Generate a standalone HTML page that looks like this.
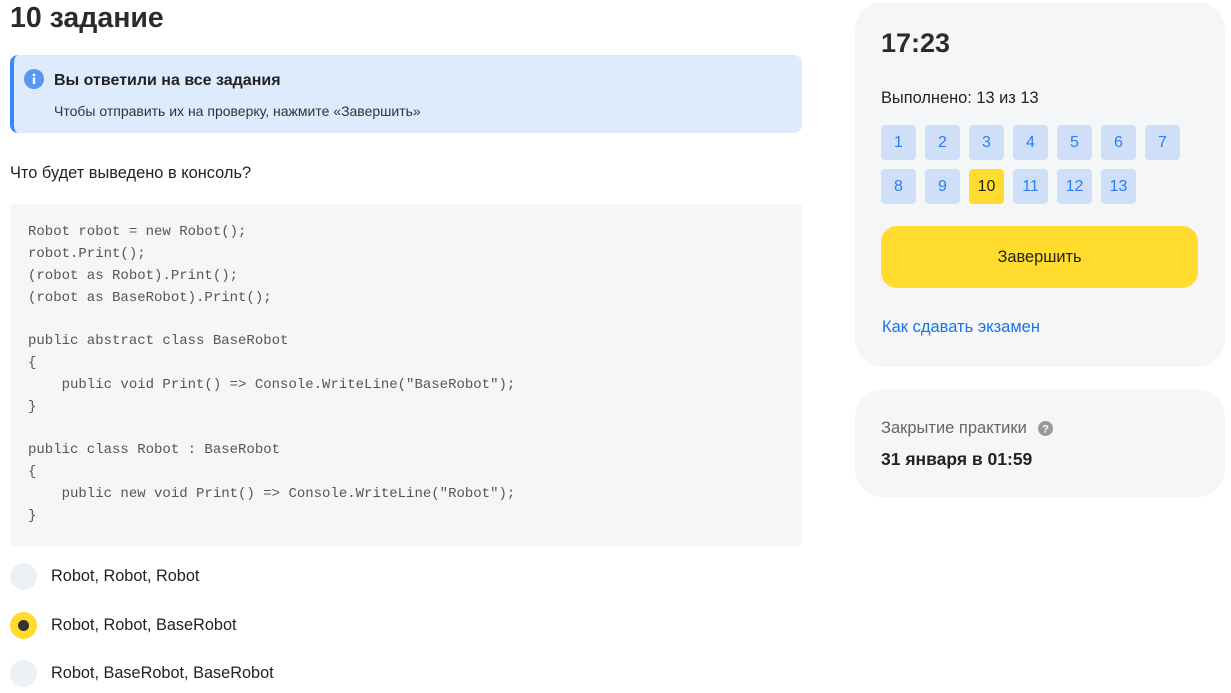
<!DOCTYPE html>
<html><head><meta charset="utf-8"><style>
*{margin:0;padding:0;box-sizing:border-box}
body{width:1231px;height:693px;background:#fff;font-family:"Liberation Sans",Arial,sans-serif;color:#222;position:relative;overflow:hidden}
.a{position:absolute;white-space:nowrap}
h1{position:absolute;left:10px;top:2px;font-size:28.5px;font-weight:bold;color:#2b2b2b}
.info{position:absolute;left:10px;top:55px;width:792px;height:78px;background:#deebfc;border-radius:8px;border-left:4px solid #3d87f2}
.code{position:absolute;left:10px;top:204px;width:792px;height:342px;background:#f5f6f8;border-radius:4px}
pre{position:absolute;left:28px;top:222px;font-family:"Liberation Mono","DejaVu Sans Mono",monospace;font-size:14px;line-height:21.85px;color:#555}
.r{position:absolute;left:10px;width:27px;height:27px;border-radius:50%;background:#edf0f5}
.r.s{background:#ffdc2e}
.r.s::after{content:"";position:absolute;left:8px;top:8px;width:11px;height:11px;border-radius:50%;background:#333}
.opt{position:absolute;left:51px;font-size:16.3px;color:#222}
.card{position:absolute;left:855px;width:370px;background:#f5f6f8;border-radius:28px}
.n{position:absolute;width:35px;height:35px;border-radius:4px;background:#cfdff8;color:#2d7ef0;font-size:16px;text-align:center;line-height:35px}
.n.y{background:#ffdc2e;color:#222}
</style></head><body>
<h1>10 задание</h1>
<div class="info"></div>
<svg class="a" style="left:24px;top:69px" width="20" height="20" viewBox="0 0 20 20"><circle cx="10" cy="10" r="10" fill="#5b96f0"/><rect x="8.8" y="8.5" width="2.4" height="6.5" fill="#fff"/><circle cx="10" cy="6" r="1.4" fill="#fff"/></svg>
<div class="a" style="left:54px;top:72px;font-size:16px;font-weight:bold;color:#222">Вы ответили на все задания</div>
<div class="a" style="left:54px;top:103px;font-size:14px;color:#333">Чтобы отправить их на проверку, нажмите «Завершить»</div>
<div class="a" style="left:10px;top:164px;font-size:16.4px;color:#222">Что будет выведено в консоль?</div>
<div class="code"></div>
<pre>Robot robot = new Robot();
robot.Print();
(robot as Robot).Print();
(robot as BaseRobot).Print();

public abstract class BaseRobot
{
    public void Print() =&gt; Console.WriteLine("BaseRobot");
}

public class Robot : BaseRobot
{
    public new void Print() =&gt; Console.WriteLine("Robot");
}</pre>
<div class="r" style="top:563px"></div><div class="opt" style="top:567px">Robot, Robot, Robot</div>
<div class="r s" style="top:612px"></div><div class="opt" style="top:616px">Robot, Robot, BaseRobot</div>
<div class="r" style="top:660px"></div><div class="opt" style="top:664px">Robot, BaseRobot, BaseRobot</div>

<div class="card" style="top:2px;height:365px"></div>
<div class="a" style="left:881px;top:28px;font-size:27px;font-weight:bold;color:#2b2b2b">17:23</div>
<div class="a" style="left:881px;top:89px;font-size:16.4px;color:#222">Выполнено: 13 из 13</div>
<div class="n" style="left:881px;top:125px">1</div><div class="n" style="left:925px;top:125px">2</div><div class="n" style="left:969px;top:125px">3</div><div class="n" style="left:1013px;top:125px">4</div><div class="n" style="left:1057px;top:125px">5</div><div class="n" style="left:1101px;top:125px">6</div><div class="n" style="left:1145px;top:125px">7</div>
<div class="n" style="left:881px;top:169px">8</div><div class="n" style="left:925px;top:169px">9</div><div class="n y" style="left:969px;top:169px">10</div><div class="n" style="left:1013px;top:169px">11</div><div class="n" style="left:1057px;top:169px">12</div><div class="n" style="left:1101px;top:169px">13</div>
<div class="a" style="left:881px;top:226px;width:317px;height:62px;background:#ffdc2e;border-radius:16px;text-align:center;line-height:62px;font-size:16.4px;color:#222">Завершить</div>
<div class="a" style="left:882px;top:318px;font-size:16.5px;color:#1a73e8">Как сдавать экзамен</div>
<div class="card" style="top:389px;height:108px"></div>
<div class="a" style="left:881px;top:419px;font-size:16.5px;color:#666">Закрытие практики</div>
<svg class="a" style="left:1038px;top:421px" width="15" height="15" viewBox="0 0 16 16"><circle cx="8" cy="8" r="8" fill="#999"/><text x="8" y="12.5" font-size="12" font-weight="bold" text-anchor="middle" fill="#fff" font-family="Liberation Sans">?</text></svg>
<div class="a" style="left:881px;top:449px;font-size:17.5px;font-weight:bold;color:#222">31 января в 01:59</div>
</body></html>
